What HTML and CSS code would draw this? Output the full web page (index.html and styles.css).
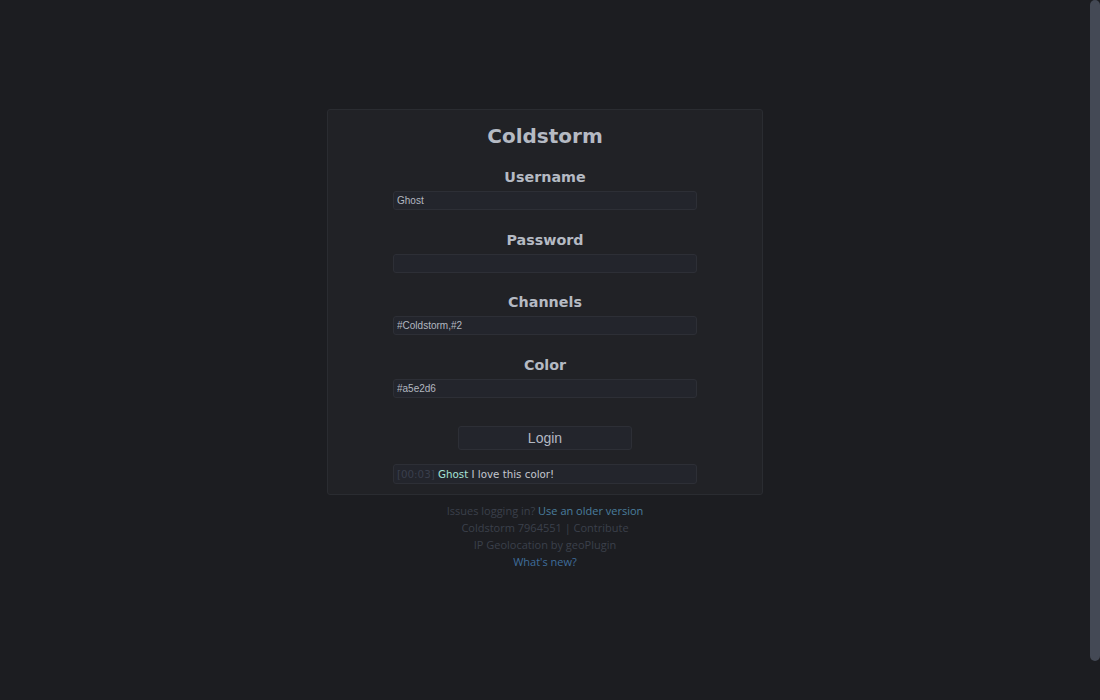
FILE: index.html
```html
<!DOCTYPE html>
<html>
<head>
<meta charset="utf-8">
<title>Coldstorm</title>
<link rel="stylesheet" href="styles.css">
</head>
<body>
<main class="page">
  <form class="card">
    <h1 class="title">Coldstorm</h1>
    <div class="field">
      <label class="label">Username</label>
      <input class="input" type="text" value="Ghost">
    </div>
    <div class="field">
      <label class="label">Password</label>
      <input class="input" type="password" value="">
    </div>
    <div class="field">
      <label class="label">Channels</label>
      <input class="input" type="text" value="#Coldstorm,#2">
    </div>
    <div class="field">
      <label class="label">Color</label>
      <input class="input" type="text" value="#a5e2d6">
    </div>
    <button class="login" type="button">Login</button>
    <div class="preview"><span class="time">[00:03]</span> <span class="nick">Ghost</span> I love this color!</div>
  </form>
  <footer class="footer">
    <p>Issues logging in? <a class="link">Use an older version</a></p>
    <p>Coldstorm 7964551 | Contribute</p>
    <p>IP Geolocation by geoPlugin</p>
    <p><a class="link link-new">What's new?</a></p>
  </footer>
</main>
<div class="scrollbar"><div class="thumb"></div></div>
</body>
</html>
```
FILE: styles.css
```css
html {
  background: #1c1d21;
}
body {
  margin: 0;
  padding-right: 10px;
  background: #1c1d21;
  font-family: "DejaVu Sans", Verdana, sans-serif;
}
.page {
  display: flex;
  flex-direction: column;
  align-items: center;
  padding-top: 109px;
}
.card {
  box-sizing: border-box;
  width: 436px;
  background: #212226;
  border: 1px solid #2a2c31;
  border-radius: 3px;
  padding: 12px 0 10px;
  display: flex;
  flex-direction: column;
  align-items: center;
}
.title {
  margin: 0 0 18px;
  font-size: 20px;
  line-height: 28px;
  font-weight: bold;
  color: #b5bac3;
}
.field {
  display: flex;
  flex-direction: column;
  align-items: center;
  gap: 5px;
  margin-bottom: 20.67px;
}
.label {
  font-size: 14.3px;
  line-height: 18px;
  font-weight: bold;
  color: #b5bac3;
}
.input {
  box-sizing: border-box;
  width: 304px;
  height: 19px;
  margin: 0;
  padding: 0 3px;
  background: #23252c;
  border: 1px solid #2d2f36;
  border-radius: 3px;
  color: #b3b8c0;
  font-family: "Liberation Sans", Arial, sans-serif;
  font-size: 10px;
  outline: none;
}
.login {
  box-sizing: border-box;
  width: 174px;
  height: 24px;
  margin: 7px 0 14px;
  padding: 0;
  background: #23252c;
  border: 1px solid #2d2f36;
  border-radius: 3px;
  color: #b3b8c3;
  font-family: "Liberation Sans", Arial, sans-serif;
  font-size: 14px;
}
.preview {
  box-sizing: border-box;
  width: 304px;
  height: 20px;
  padding: 0 3px;
  background: #23252c;
  border: 1px solid #2d2f36;
  border-radius: 3px;
  font-family: "DejaVu Sans", Verdana, sans-serif;
  font-size: 10.3px;
  line-height: 18px;
  color: #c3c7cf;
}
.time {
  color: #3a3f4c;
}
.nick {
  color: #a5e2d6;
}
.footer {
  margin-top: 7px;
  text-align: center;
  font-family: "Open Sans", sans-serif;
  font-size: 11px;
  line-height: 17px;
  color: #3b404b;
}
.footer p {
  margin: 0;
}
.link {
  color: #4a7e9e;
}
.link-new {
  color: #3f6d9c;
}
.scrollbar {
  position: fixed;
  top: 0;
  right: 0;
  width: 10px;
  height: 100%;
  background: #1c1d21;
}
.thumb {
  height: 661px;
  background: #444955;
  border-radius: 5px;
}
```
